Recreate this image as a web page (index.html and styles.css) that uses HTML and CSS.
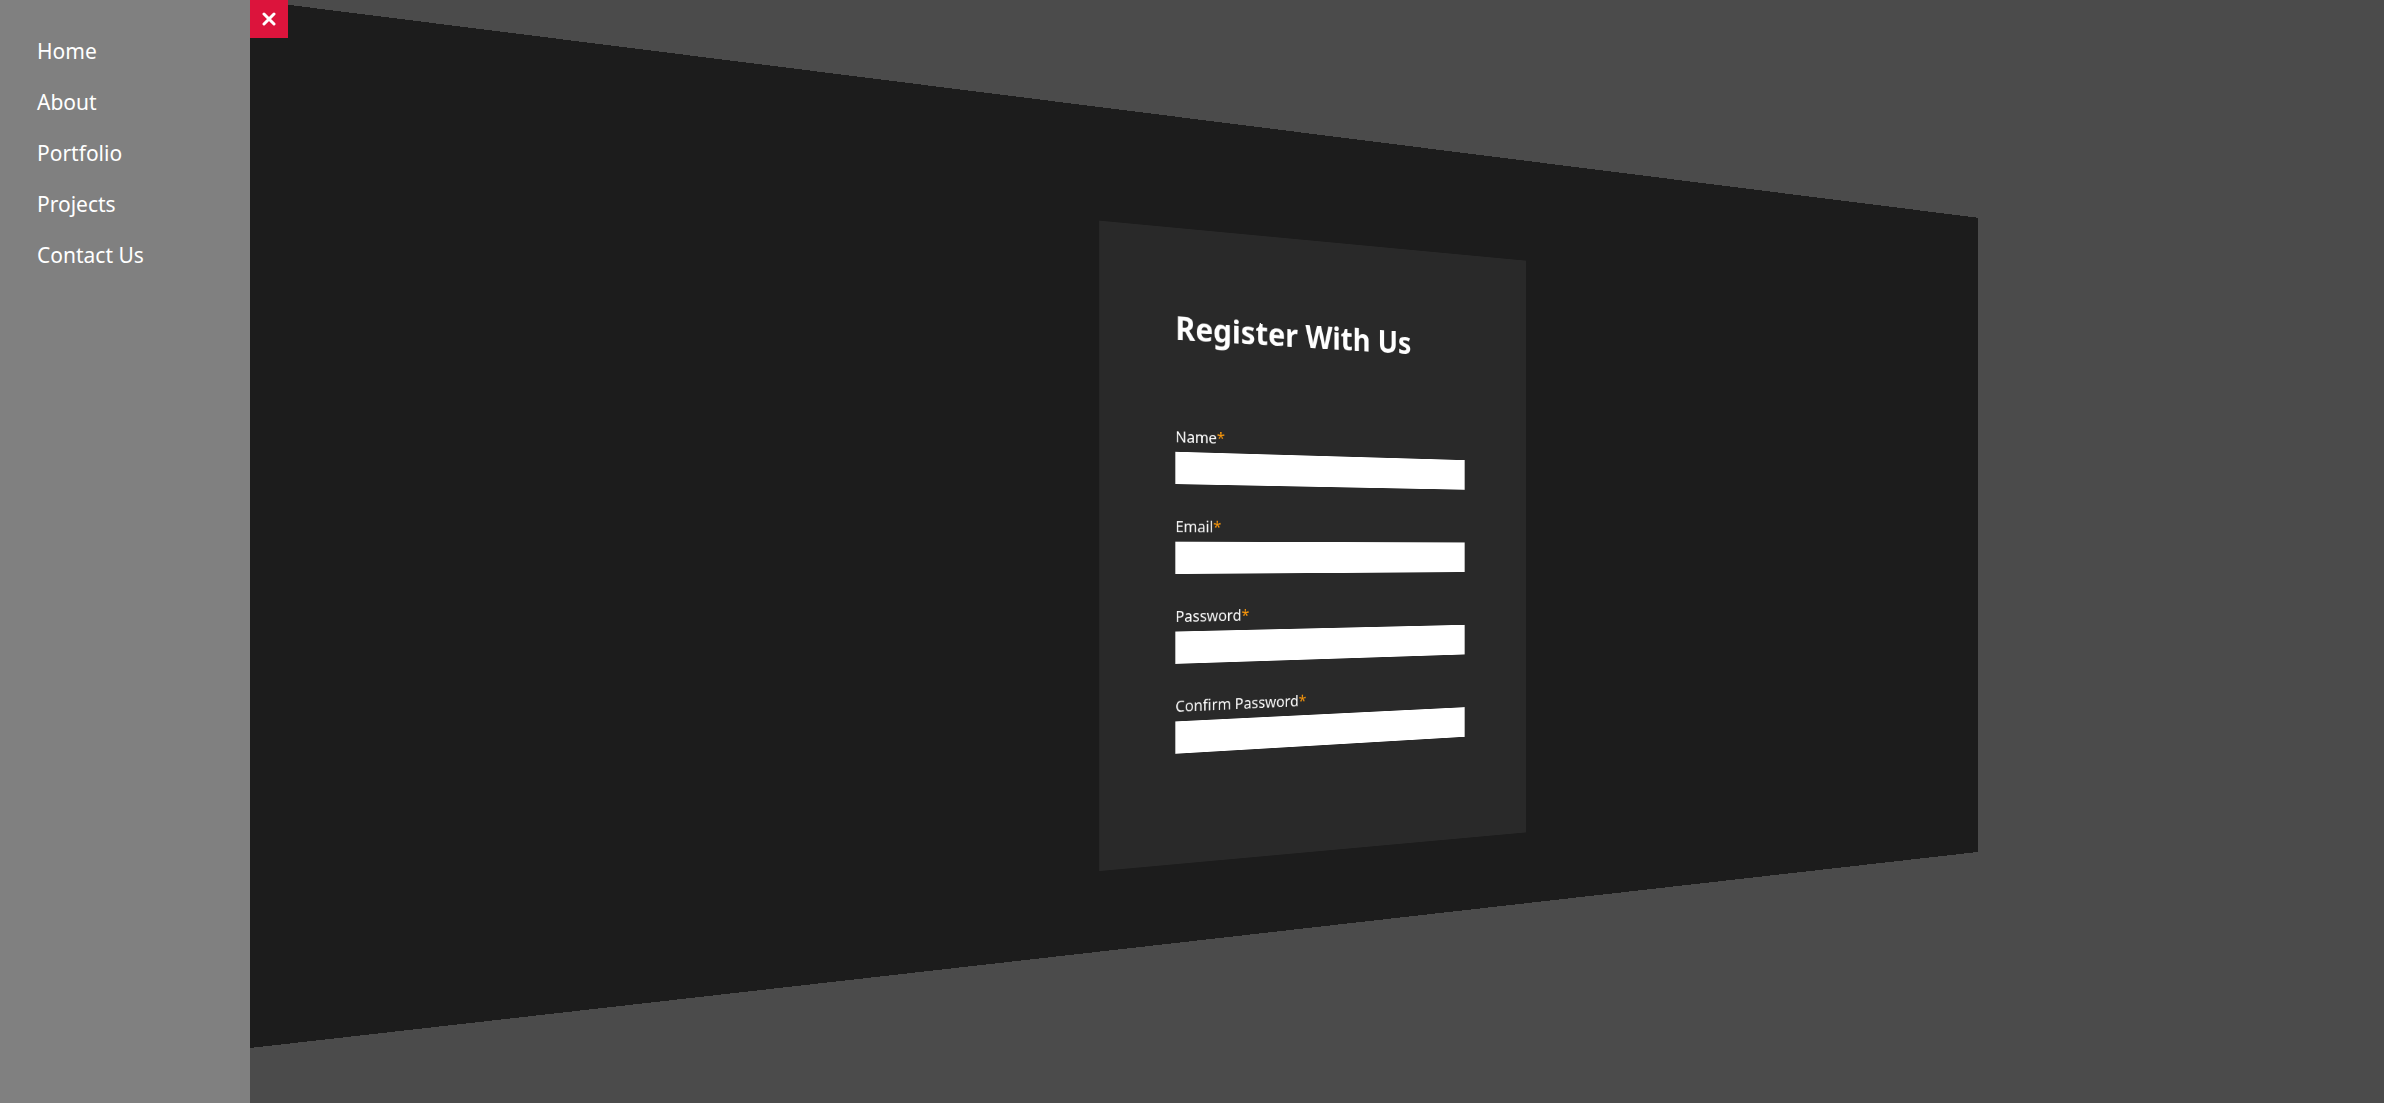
FILE: index.html
```html
<!DOCTYPE html>
<html lang="en">
<head>
  <meta charset="utf-8">
  <title>Register With Us</title>
  <meta name="viewport" content="width=device-width, initial-scale=1">
  <link rel="stylesheet" href="styles.css">
</head>
<body>
  <aside class="drawer">
    <nav class="menu">
      <a class="menu-link" href="#home">Home</a>
      <a class="menu-link" href="#about">About</a>
      <a class="menu-link" href="#portfolio">Portfolio</a>
      <a class="menu-link" href="#projects">Projects</a>
      <a class="menu-link" href="#contact">Contact Us</a>
    </nav>
    <button class="close" type="button" aria-label="Close menu">
      <svg class="close-icon" viewBox="0 0 14 14" aria-hidden="true">
        <path d="M2 2l10 10M12 2L2 12" fill="none" stroke="currentColor" stroke-width="3" stroke-linecap="round"/>
      </svg>
    </button>
  </aside>
  <div class="stage">
    <main class="page">
      <form class="card">
        <h1 class="title">Register With Us</h1>
        <div class="field">
          <label class="label" for="name">Name<span class="required">*</span></label>
          <input class="input" id="name" type="text">
        </div>
        <div class="field">
          <label class="label" for="email">Email<span class="required">*</span></label>
          <input class="input" id="email" type="email">
        </div>
        <div class="field">
          <label class="label" for="password">Password<span class="required">*</span></label>
          <input class="input" id="password" type="password">
        </div>
        <div class="field">
          <label class="label" for="confirm">Confirm Password<span class="required">*</span></label>
          <input class="input" id="confirm" type="password">
        </div>
      </form>
    </main>
  </div>
</body>
</html>
```
FILE: styles.css
```css
* {
  box-sizing: border-box;
  margin: 0;
  padding: 0;
}

body {
  background: #4b4b4b;
  color: #fff;
  font-family: "Segoe UI", "Noto Sans", sans-serif;
  overflow: hidden;
}

/* Side menu, laid over the page */
.drawer {
  position: fixed;
  top: 0;
  bottom: 0;
  left: 0;
  z-index: 1;
  display: flex;
  align-items: flex-start;
}

.menu {
  display: flex;
  flex-direction: column;
  gap: 24px;
  width: 250px;
  height: 100%;
  padding: 38px 37px;
  background: #808080;
}

.menu-link {
  color: #fff;
  font-size: 21px;
  line-height: 27px;
  text-decoration: none;
}

.close {
  display: grid;
  place-items: center;
  width: 38px;
  height: 38px;
  border: 0;
  background: #dc143c;
  color: #fff;
  cursor: pointer;
}

.close-icon {
  width: 14px;
  height: 14px;
}

/* The page swings back from its left edge while the menu is open */
.stage {
  min-height: 100vh;
  perspective: 1250px;
  overflow: hidden;
}

.page {
  display: flex;
  justify-content: center;
  align-items: flex-start;
  min-height: 95vh;
  padding-top: 141px;
  background: #1c1c1c;
  transform: translateX(250px) rotateY(20deg);
  transform-origin: left;
}

.card {
  display: flex;
  flex-direction: column;
  gap: 40px;
  width: 624px;
  padding: 100px 100px 140px;
  background: #292929;
}

.title {
  margin-bottom: 58px;
  font-size: 41px;
  line-height: 53px;
}

.field {
  display: flex;
  flex-direction: column;
  gap: 5px;
}

.label {
  font-size: 20px;
  line-height: 28px;
}

.required {
  color: #ff9a0a;
}

.input {
  width: 100%;
  height: 41px;
  padding: 0 10px;
  border: 0;
  background: #fff;
  font: inherit;
}
```
